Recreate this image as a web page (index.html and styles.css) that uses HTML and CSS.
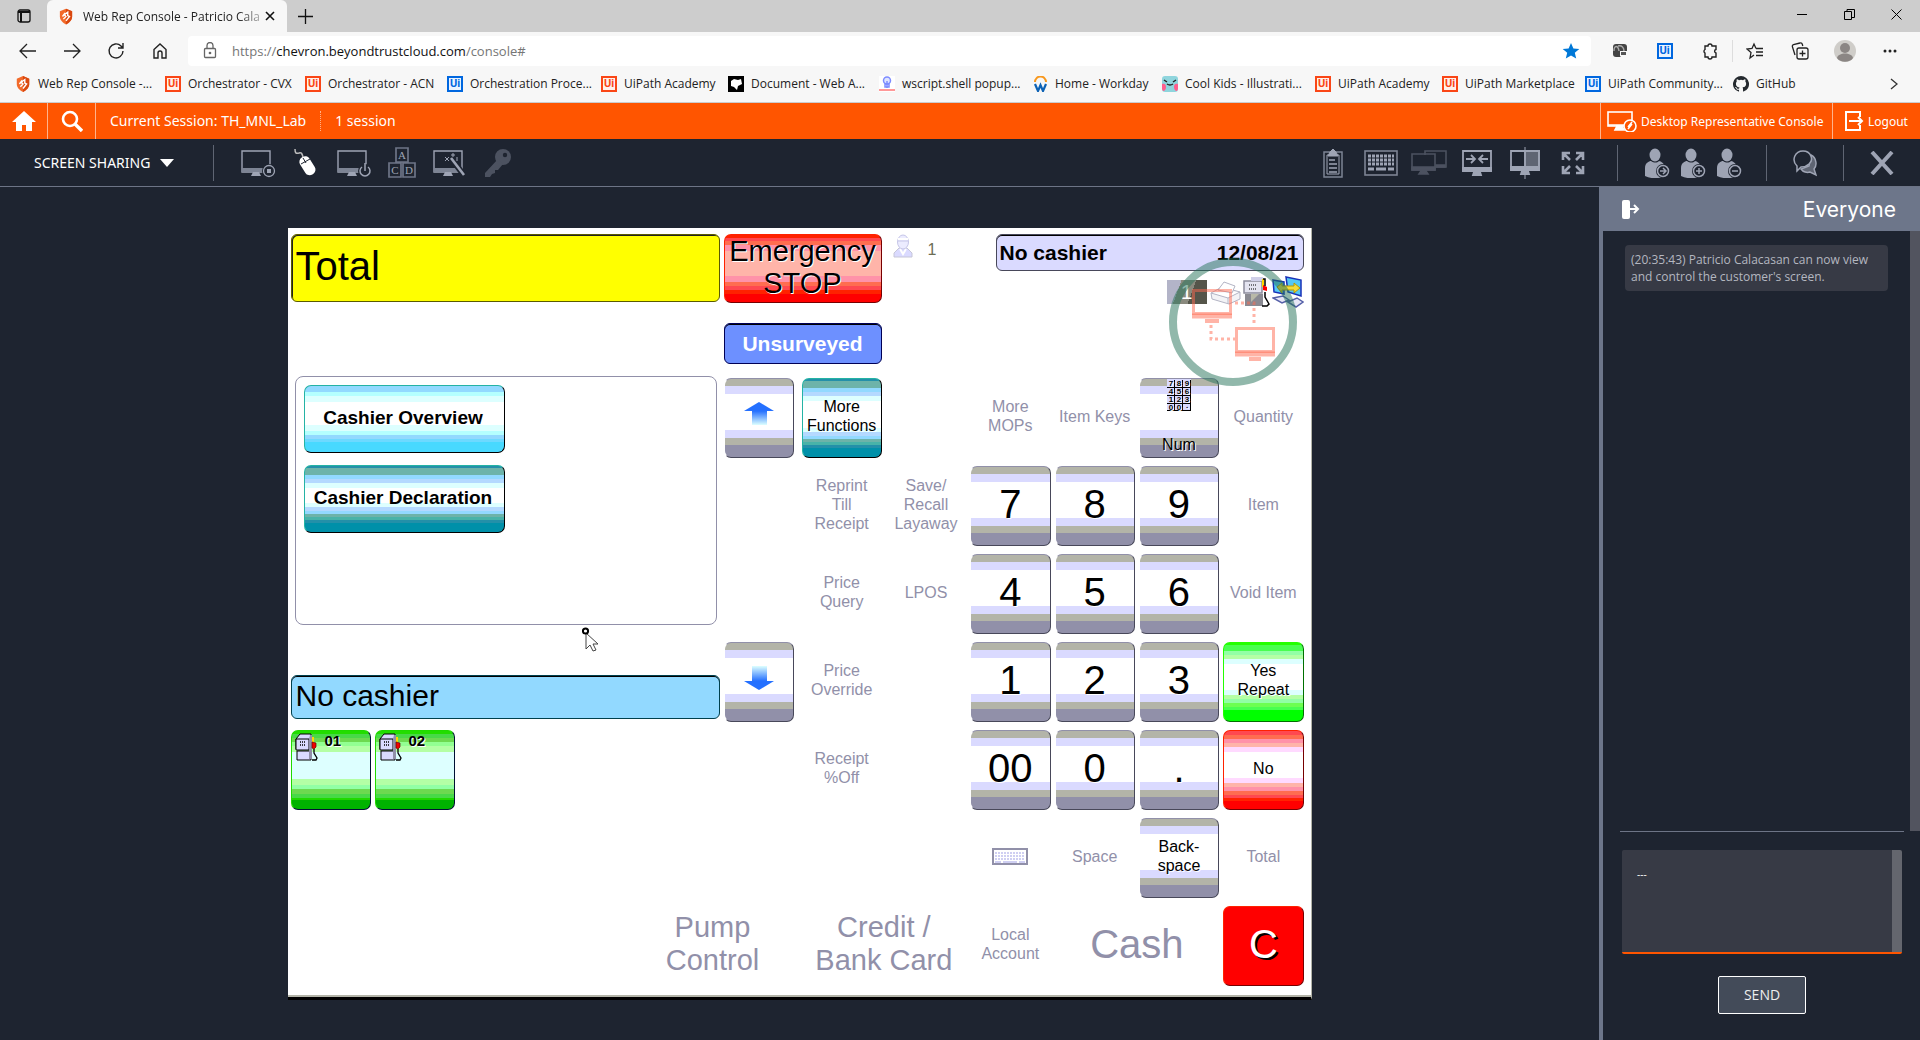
FILE: index.html
```html
<!DOCTYPE html>
<html lang="en">
<head>
<meta charset="utf-8">
<title>Web Rep Console</title>
<link rel="stylesheet" href="styles.css">
</head>
<body>
<svg class="defs" aria-hidden="true">
  <symbol id="shield" viewBox="0 0 16 18"><path fill="#f26a2a" d="M8 0 15 3v6c0 4-3 7-7 9-4-2-7-5-7-9V3z"/><path fill="#d9480f" d="M8 0 15 3v6c0 4-3 7-7 9z"/><path d="M5 12l3-3-2-2 4-3v4l2 1-4 5M4 9l3-4" fill="none" stroke="#fff" stroke-width="1.6"/></symbol>
  <symbol id="pump" viewBox="0 0 24 28"><path d="M1 6l4-5h11v15H1z" fill="#dadaff" stroke="#000"/><path d="M1 6h13V17H1zM2 18h14v9H2z" fill="#dadaff" stroke="#000"/><path d="M5 9h6M5 12h6" stroke="#000" stroke-width="1.3" stroke-dasharray="1 1"/><path d="M15 2h2v24h-3V6z" fill="#9190a9"/><path d="M18 4v5" stroke="#ffd900" stroke-width="2"/><path d="M17 9l4 1v4l-2 2-2-1z" fill="#f00000" stroke="#600" stroke-width=".7"/><path d="M19 16v4l3 5-1 2h-4" fill="none" stroke="#000" stroke-width="1.300"/></symbol>
  <symbol id="person" viewBox="0 0 26 30"><ellipse cx="10" cy="7" rx="5.500" ry="6.500"/><path d="M0 28V20c0-5 4-7 6-7 3 2 6 2 8 0 2 0 6 3 6 7v8c-6 3-14 3-20 0z"/><circle cx="18" cy="23" r="7" fill="#1e2430"/><circle cx="18" cy="23" r="5.500" fill="none" stroke="#9ea4b4" stroke-width="1.500"/></symbol>
  <symbol id="monitor" viewBox="0 0 36 30"><path d="M2 3h28v21H2z" fill="none" stroke="#9ea4b4" stroke-width="1.400"/><path d="M2 20h28v4H2z" fill="#7d8494"/><path d="M13 24h6l2 4H11z" fill="#9ea4b4"/></symbol>
</svg>

<header class="browser">
  <div class="tabs">
    <button class="plain tab-menu" aria-label="Tab actions"><svg width="16" height="16" viewBox="0 0 16 16" fill="none" stroke="#111" stroke-width="1.3"><rect x="2" y="2" width="12" height="12" rx="2"/><path d="M2 4h12M5 5v9" stroke-width="2"/></svg></button>
    <div class="tab"><svg width="14" height="17"><use href="#shield"/></svg><span class="tab-title">Web Rep Console - Patricio Cala</span><button class="plain" aria-label="Close tab"><svg width="10" height="10" viewBox="0 0 10 10"><path d="M1 1l8 8M9 1L1 9" stroke="#111" stroke-width="1.6"/></svg></button></div>
    <button class="plain new-tab" aria-label="New tab"><svg width="15" height="15" viewBox="0 0 15 15"><path d="M7.500 0v15M0 7.500h15" stroke="#111" stroke-width="1.3"/></svg></button>
    <div class="window-buttons">
      <button class="plain" aria-label="Minimize"><svg width="11" height="11" viewBox="0 0 11 11"><path d="M0 5.500h10" stroke="#000"/></svg></button>
      <button class="plain" aria-label="Restore"><svg width="11" height="11" viewBox="0 0 11 11" fill="none" stroke="#000"><path d="M.5 2.500h7v8h-7zM3 2V.5h7.500v8H8"/></svg></button>
      <button class="plain" aria-label="Close"><svg width="11" height="11" viewBox="0 0 11 11"><path d="M.5.5l10 10M10.500.5l-10 10" stroke="#000"/></svg></button>
    </div>
  </div>
  <div class="address-row">
    <div class="nav-buttons">
      <button class="plain" aria-label="Back"><svg width="18" height="16" viewBox="0 0 18 16" fill="none" stroke="#222" stroke-width="1.3"><path d="M17 8H1M8 1L1 8l7 7"/></svg></button>
      <button class="plain" aria-label="Forward"><svg width="18" height="16" viewBox="0 0 18 16" fill="none" stroke="#222" stroke-width="1.3"><path d="M1 8h16M10 1l7 7-7 7"/></svg></button>
      <button class="plain" aria-label="Reload"><svg width="18" height="18" viewBox="0 0 18 18" fill="none" stroke="#222" stroke-width="1.4"><path d="M16 9a7 7 0 1 1-2-5l2 2M16 1v5h-5"/></svg></button>
      <button class="plain" aria-label="Home"><svg width="18" height="18" viewBox="0 0 18 18" fill="none" stroke="#222" stroke-width="1.4"><path d="M3 7.500L9 2l6 5.500V16h-4v-5a2 2 0 0 0-4 0v5H3z"/></svg></button>
    </div>
    <div class="address"><svg width="14" height="18" viewBox="0 0 14 18" fill="none" stroke="#666" stroke-width="1.3"><rect x="1.500" y="6.500" width="11" height="9" rx="1"/><path d="M4 6V3.500a3 3 0 0 1 6 0V6"/><circle cx="7" cy="11" r=".7" fill="#666"/></svg><span class="url">https://<b>chevron.beyondtrustcloud.com</b>/console#</span><svg width="18" height="18" viewBox="0 0 18 18"><path fill="#0078d7" d="M9 1l2.400 5.400 5.900.5-4.500 3.900 1.400 5.800L9 13.500l-5.200 3.100 1.400-5.800L.7 6.900l5.900-.5z"/></svg></div>
    <div class="extensions">
      <button class="plain" aria-label="Recorder"><svg width="16" height="16" viewBox="0 0 16 16"><rect x="1" y="1" width="14" height="13" rx="3" fill="#444"/><path d="M2 8c0-6 4-6 5 0M6 3c4-1 6 2 6 5" fill="none" stroke="#aaa" stroke-width="1.400"/><path d="M8 8h8v7H10l-2-2z" fill="#f7f7f7"/><path d="M9 9h5v3h-5z" fill="#555"/></svg></button>
      <button class="plain" aria-label="UiPath"><span class="ui blue">Ui</span></button>
      <button class="plain" aria-label="Extensions"><svg width="18" height="18" viewBox="0 0 18 18" fill="none" stroke="#222" stroke-width="1.4"><path d="M4 4h3a2 2 0 0 1 4 0h4v3.500a1.800 1.800 0 0 0 0 3.500v4h-4a2 2 0 0 1-4 0H4v-4a2 2 0 0 1 0-3.500z"/></svg></button>
      <button class="plain" aria-label="Favorites"><svg width="18" height="18" viewBox="0 0 18 18" fill="none" stroke="#222" stroke-width="1.3"><path d="M10 6.500L8 2 6 6.500 1 7l4 3.500L4 16l4-3M10 6.500h7M10 10h7M10 13.500h7"/></svg></button>
      <button class="plain" aria-label="Collections"><svg width="18" height="18" viewBox="0 0 18 18" fill="none" stroke="#222" stroke-width="1.3"><rect x="6" y="6" width="11" height="11" rx="2"/><path d="M11.500 8.500v6M8.500 11.500h6M4 13L1.500 5c-.4-1 0-2 1-2.300L9 1c1-.3 2 .2 2.300 1.200l.5 1.800"/></svg></button>
      <button class="plain" aria-label="Profile"><svg width="22" height="22" viewBox="0 0 22 22"><circle cx="11" cy="11" r="11" fill="#cfcdc9"/><circle cx="11" cy="8" r="5" fill="#8b8684"/><path d="M3 18c1-6 15-6 16 0-3 5-13 5-16 0z" fill="#8b8684"/></svg></button>
      <button class="plain" aria-label="Settings"><svg width="14" height="4" viewBox="0 0 14 4" fill="#222"><circle cx="2" cy="2" r="1.500"/><circle cx="7" cy="2" r="1.500"/><circle cx="12" cy="2" r="1.500"/></svg></button>
    </div>
  </div>
  <nav class="bookmarks">
    <a href="#"><svg width="16" height="16"><use href="#shield"/></svg>Web Rep Console -...</a>
    <a href="#"><span class="ui">Ui</span>Orchestrator - CVX</a>
    <a href="#"><span class="ui">Ui</span>Orchestrator - ACN</a>
    <a href="#"><span class="ui blue">Ui</span>Orchestration Proce...</a>
    <a href="#"><span class="ui">Ui</span>UiPath Academy</a>
    <a href="#"><svg width="16" height="16" viewBox="0 0 16 16"><path fill="#000" d="M0 0h16v16H0z"/><path fill="#fff" d="M3 5l3-2 4 1 3-1 1 5-4 2-1 4-3-3-3-1z"/></svg>Document - Web A...</a>
    <a href="#"><svg width="16" height="16" viewBox="0 0 16 16"><path fill="#fff" d="M0 0h16v16H0z"/><circle cx="8" cy="4.500" r="3.500" fill="#dfe4ff" stroke="#7d8cff" stroke-width="1.500"/><path d="M8 5v7M6 8h4v3H6z" fill="none" stroke="#7d8cff" stroke-width="1.500"/><path d="M0 14h16" stroke="#f99" stroke-width="2"/></svg>wscript.shell popup...</a>
    <a href="#"><svg width="15" height="16" viewBox="0 0 15 16" fill="none"><path d="M2 6a5.500 5.500 0 0 1 11 0" stroke="#f8981d" stroke-width="2"/><path d="M2 8l3 7 2.500-6 2.500 6 3-7" stroke="#0d62b5" stroke-width="2.200"/></svg>Home - Workday</a>
    <a href="#"><svg width="16" height="16" viewBox="0 0 16 16"><rect width="16" height="16" rx="3" fill="#8fd5dd"/><path d="M0 8c3-1 4 1 4 3s-1 4-3 4l-1-2zM16 8c-3-1-4 1-4 3s1 4 3 4l1-2z" fill="#ff5f8d"/><path d="M2 4l3 2M14 4l-3 2M5 8q3 2 6 0" stroke="#222" stroke-width="1.500" fill="none"/></svg>Cool Kids - Illustrati...</a>
    <a href="#"><span class="ui">Ui</span>UiPath Academy</a>
    <a href="#"><span class="ui">Ui</span>UiPath Marketplace</a>
    <a href="#"><span class="ui blue">Ui</span>UiPath Community...</a>
    <a href="#"><svg width="16" height="16" viewBox="0 0 16 16"><path fill="#24292e" d="M8 0a8 8 0 0 0-2.530 15.590c.4.070.550-.170.550-.380v-1.490c-2.010.370-2.530-.490-2.690-.940-.090-.230-.480-.940-.820-1.130-.280-.150-.680-.520-.010-.530.630-.010 1.080.580 1.230.820.720 1.210 1.870.870 2.330.660.070-.520.280-.870.510-1.070-1.780-.200-3.640-.890-3.640-3.950 0-.870.310-1.590.820-2.150-.080-.200-.360-1.020.080-2.120 0 0 .670-.210 2.200.820a7.400 7.400 0 0 1 4 0c1.530-1.040 2.200-.820 2.200-.820.440 1.100.160 1.920.080 2.120.510.560.820 1.270.820 2.150 0 3.070-1.870 3.750-3.650 3.950.290.250.540.730.540 1.480v2.200c0 .210.150.460.550.380A8 8 0 0 0 8 0z"/></svg>GitHub</a>
    <button class="plain more" aria-label="More favorites"><svg width="8" height="12" viewBox="0 0 8 12"><path d="M1 1l6 5-6 5" fill="none" stroke="#333" stroke-width="1.300"/></svg></button>
  </nav>
</header>

<div class="session-bar">
  <a href="#" class="square" aria-label="Home"><svg width="24" height="20" viewBox="0 0 24 20" fill="#fff"><path d="M12 0l12 11h-4v9h-6v-6h-4v6H4v-9H0z"/></svg></a>
  <a href="#" class="square" aria-label="Search"><svg width="22" height="22" viewBox="0 0 22 22" fill="none" stroke="#fff"><circle cx="9" cy="9" r="7" stroke-width="2.600"/><path d="M14 14l7 7" stroke-width="3.400"/></svg></a>
  <span class="current">Current Session: TH_MNL_Lab</span>
  <span class="count">1 session</span>
  <a href="#" class="console-link"><svg width="30" height="22" viewBox="0 0 30 22" fill="none" stroke="#fff" stroke-width="1.600"><rect x="1" y="2" width="24" height="14"/><path d="M1 15h18M8 20h9l-2-4h-5z" fill="#fff"/><circle cx="23" cy="16" r="6" fill="#ff5500"/><path d="M21 17l4-5M21 19l4-5"/></svg>Desktop Representative Console</a>
  <a href="#" class="logout"><svg width="19" height="20" viewBox="0 0 19 20" fill="none" stroke="#fff" stroke-width="2"><path d="M15 6V1H1v18h14v-5M4 10h13M13 6l4 4-4 4"/></svg>Logout</a>
</div>

<div class="toolbar">
  <button class="plain mode">SCREEN SHARING <span class="caret"></span></button>
  <div class="tools left-tools">
    <button class="plain" aria-label="Stop screen sharing"><svg width="36" height="30" viewBox="0 0 36 30"><use href="#monitor"/><circle cx="29" cy="23" r="7" fill="#1e2430"/><circle cx="29" cy="23" r="5.500" fill="none" stroke="#9ea4b4" stroke-width="1.300"/><path d="M27 21h4v4h-4z" fill="#9ea4b4"/></svg></button>
    <button class="plain" aria-label="Mouse control"><svg width="24" height="30" viewBox="0 0 24 30"><path d="M1 1c0 4 1 5 4 4 2-1 3 0 4 4" fill="none" stroke="#bbb" stroke-width="1.500"/><rect x="8" y="8" width="11" height="20" rx="5" fill="#fff" transform="rotate(-32 13 18)"/><path d="M7 16l9-5M9 10l3 5" stroke="#1e2430"/></svg></button>
    <button class="plain" aria-label="Power"><svg width="36" height="30" viewBox="0 0 36 30"><use href="#monitor"/><circle cx="29" cy="23" r="7" fill="#1e2430"/><path d="M26 19a5 5 0 1 0 6 0M29 15v8" fill="none" stroke="#9ea4b4" stroke-width="1.500"/></svg></button>
    <button class="plain" aria-label="Special keys"><svg width="28" height="32" viewBox="0 0 28 32"><path d="M8 1h12v14H8zM1 16h12v14H1zM15 16h12v14H15z" fill="none" stroke="#6d7486" stroke-width="1.700"/><g fill="#9ea4b4" font-family="Liberation Serif" font-size="11" text-anchor="middle"><text x="14" y="12">A</text><text x="7" y="27">C</text><text x="21" y="27">D</text></g></svg></button>
    <button class="plain" aria-label="Canned scripts"><svg width="36" height="30" viewBox="0 0 36 30"><use href="#monitor"/><path d="M19 10l12 16" stroke="#1e2430" stroke-width="6"/><path d="M19 10l13 17" stroke="#9ea4b4" stroke-width="2.600"/><path d="M13 9l4 4M17 9l-4 4M21 5v4M19 7h4M25 9v4" stroke="#9ea4b4"/></svg></button>
    <button class="plain" aria-label="Credentials"><svg width="28" height="30" viewBox="0 0 28 30"><circle cx="19" cy="9" r="8" fill="#4c5260"/><circle cx="21" cy="7" r="2.200" fill="#1e2430"/><path d="M14 11L1 25v4h5l2-3 3-1v-3h3l5-6z" fill="#4c5260"/></svg></button>
  </div>
  <div class="tools view-tools">
    <button class="plain" aria-label="Clipboard"><svg width="22" height="30" viewBox="0 0 22 30" fill="none" stroke="#9ea4b4"><rect x="2" y="4" width="18" height="25" stroke="#7d8494" stroke-width="1.500"/><path d="M5 7h12v19H5z"/><path d="M6 8l2-4 3-3 3 3 2 4z" fill="#9ea4b4"/><path d="M7 12h6M7 16h8M7 20h8M7 24h8" stroke-width="1.500"/></svg></button>
    <button class="plain" aria-label="Keyboard"><svg width="34" height="26" viewBox="0 0 34 26" fill="none" stroke="#9ea4b4"><rect x="1" y="1" width="32" height="24" stroke="#7d8494" stroke-width="1.600"/><path d="M4 6h26M4 10h26M4 14h26" stroke-width="2.800" stroke-dasharray="3 1"/><path d="M4 19h6M12 19h10M24 19h6" stroke-width="3"/></svg></button>
    <button class="plain" aria-label="Select display"><svg width="36" height="26" viewBox="0 0 36 26" fill="none" stroke="#4c5260" stroke-width="1.600"><path d="M14 5V1h21v16H25M1 4h23v16H1z"/><path d="M1 17h23v3H1zM10 21h5l2 3H8zM25 15h9v2h-9z" fill="#4c5260"/></svg></button>
    <button class="plain" aria-label="Scale"><svg width="32" height="28" viewBox="0 0 32 28" fill="none" stroke="#9ea4b4" stroke-width="1.800"><path d="M2 2h28v20H2z"/><path d="M2 19h28v3H2zM13 23h6l1 3h-8z" fill="#9ea4b4"/><path d="M5 10h9M10 6l4 4-4 4M27 10h-9M22 6l-4 4 4 4"/></svg></button>
    <button class="plain" aria-label="Split view"><svg width="32" height="32" viewBox="0 0 32 32" fill="none" stroke="#9ea4b4" stroke-width="1.800"><path d="M16 4h14v16H16z" fill="#5f6573"/><path d="M2 4h28v19H2z"/><path d="M2 20h28v3H2zM13 24h6l1 3h-8z" fill="#9ea4b4"/><path d="M16 0v32" stroke-width="1"/></svg></button>
    <button class="plain" aria-label="Full screen"><svg width="24" height="24" viewBox="0 0 24 24" fill="none" stroke="#9ea4b4" stroke-width="2.600"><path d="M2 9V2h7M2 2l7 7M15 2h7v7M22 2l-7 7M2 15v7h7M2 22l7-7M15 22h7v-7M22 22l-7-7"/></svg></button>
  </div>
  <div class="tools people-tools">
    <button class="plain" aria-label="Share session"><svg width="26" height="30" viewBox="0 0 26 30" fill="#9ea4b4"><use href="#person"/><path d="M15 23h6M18 20l3 3-3 3" fill="none" stroke="#9ea4b4" stroke-width="1.500"/></svg></button>
    <button class="plain" aria-label="Add representative"><svg width="26" height="30" viewBox="0 0 26 30" fill="#9ea4b4"><use href="#person"/><path d="M15 23h6M18 20v6" stroke="#9ea4b4" stroke-width="1.500"/></svg></button>
    <button class="plain" aria-label="Remove representative"><svg width="26" height="30" viewBox="0 0 26 30" fill="#9ea4b4"><use href="#person"/><path d="M15 23h6" stroke="#9ea4b4" stroke-width="1.500"/></svg></button>
  </div>
  <div class="tools one-tool"><button class="plain" aria-label="Chat"><svg width="24" height="28" viewBox="0 0 24 28" fill="none" stroke="#9ea4b4" stroke-width="1.500"><path d="M18 6c6 3 6 11 3 14l2 6-6-3c-3 1-7 0-9-3l8-3z" fill="#5f6573"/><path d="M4 22v-5c-6-6-2-15 6-15s11 9 6 13c-3 3-5 3-8 3z" fill="#1e2430"/></svg></button></div>
  <div class="tools one-tool"><button class="plain" aria-label="Close session"><svg width="24" height="24" viewBox="0 0 24 24"><path d="M2 1l20 22M22 1L2 23" stroke="#9ea4b4" stroke-width="4"/></svg></button></div>
</div>

<div class="workspace">
  <main class="stage">
    <div class="pos">
      <div class="pos-main">
        <div class="pos-left">
          <div class="total">Total</div>
          <div class="list">
            <button class="wide sky">Cashier Overview</button>
            <button class="wide teal">Cashier Declaration</button>
          </div>
          <div class="cashier">No cashier</div>
          <div class="pumps">
            <button class="key green-dark pump"><svg width="24" height="28"><use href="#pump"/></svg><b>01</b></button>
            <button class="key green-dark pump"><svg width="24" height="28"><use href="#pump"/></svg><b>02</b></button>
          </div>
        </div>
        <div class="pos-right">
          <div class="pos-top">
            <div class="alerts">
              <button class="key emergency">Emergency<br>STOP</button>
              <button class="unsurveyed">Unsurveyed</button>
            </div>
            <div class="user"><svg width="20" height="24" viewBox="0 0 20 24"><path d="M1 23v-4l5-5h8l5 5v4z" fill="#dadaff" stroke="#c6c6d8"/><ellipse cx="10" cy="8" rx="5.500" ry="7" fill="#ececff" stroke="#c6c6e8"/><path d="M5 5h10M7 15l3 5 3-5" stroke="#fff" stroke-width="2" fill="none"/><path d="M5 7h10" stroke="#c6c6e8"/></svg><span>1</span></div>
            <div class="status">
              <div class="status-line"><span>No cashier</span><span>12/08/21</span></div>
              <div class="status-icons">
                <span class="terminal">1</span>
                <svg width="32" height="26" viewBox="0 0 32 26" fill="#f3f3f6" stroke="#b3b4c4"><path d="M1 14L12 8l18 5v7l-11 5L2 20zM1 14l17 5 12-6M18 19v6"/><path d="M8 11L14 3l11 4-3 7z" fill="#fff"/></svg>
                <svg width="28" height="30" viewBox="0 0 28 30"><path d="M1 4h18v12H1z" fill="#e4e4f0" stroke="#8c8c9c" stroke-width="1.500"/><path d="M8 0h12v4H8z" fill="#cfcfe8"/><path d="M6 8h8M6 12h8" stroke="#000" stroke-dasharray="1 1"/><path d="M2 17h18v12H2z" fill="#8a8a92"/><path d="M8 17h8L8 25z" fill="#b9b9a8"/><path d="M20 2v8" stroke="#ffd900" stroke-width="2"/><path d="M20 8l4 2v4l-4-1z" fill="#f00"/><path d="M20 2h2v7M22 15v5l4 7-2 2h-5" fill="none" stroke="#000" stroke-width="1.500"/></svg>
                <svg width="32" height="32" viewBox="0 0 32 32"><path d="M1 4l11 2v12L2 16zM14 1l15 3v16l-13-4z" fill="#55c8f5" stroke="#1831b8" stroke-width="1.500"/><path d="M1 22l10-2 6 4-7 3zM16 26l9-4 6 4-7 5z" fill="#e7e7f7" stroke="#5560a8" stroke-width="1.500"/><path d="M5 11l5-4v3h12V7l6 5-6 5v-3H10v3z" fill="#f4dc39" stroke="#b89900"/></svg>
              </div>
            </div>
          </div>
          <div class="keypad">
            <button class="key gray r1" aria-label="Scroll up"><svg width="30" height="24" viewBox="0 0 30 24"><defs><linearGradient id="fade" x1="0" y1="0" x2="0" y2="1"><stop offset="0" stop-color="#2470ff"/><stop offset="1" stop-color="#dff"/></linearGradient></defs><path d="M15 0l15 9H0z" fill="#2470ff"/><path d="M8 9h15v14H8z" fill="url(#fade)"/></svg></button>
            <button class="key teal r1 c2">More Functions</button>
            <button class="key r1 c4" disabled>More MOPs</button>
            <button class="key r1 c5" disabled>Item Keys</button>
            <button class="key gray num r1 c6"><svg width="24" height="32" viewBox="0 0 24 32"><path d="M0 0h24v32H0z" fill="#dadaff"/><path d="M7.500 1v31M15.500 1v31M23.500 1v31M0 8.500h24M0 16.500h24M0 24.500h24M0 31.500h24" stroke="#000"/><g font-family="Liberation Sans" font-weight="bold" font-size="8" text-anchor="middle"><text x="4" y="7">7</text><text x="12" y="7">8</text><text x="20" y="7">9</text><text x="4" y="15">4</text><text x="12" y="15">5</text><text x="20" y="15">6</text><text x="4" y="23">1</text><text x="12" y="23">2</text><text x="20" y="23">3</text><text x="4" y="31">0</text><text x="12" y="31">0</text><text x="20" y="29">.</text></g></svg>Num</button>
            <button class="key r1 c7" disabled>Quantity</button>

            <button class="key r2 c2" disabled>Reprint<br>Till<br>Receipt</button>
            <button class="key r2 c3" disabled>Save/<br>Recall<br>Layaway</button>
            <button class="key gray digit r2 c4">7</button>
            <button class="key gray digit r2 c5">8</button>
            <button class="key gray digit r2 c6">9</button>
            <button class="key r2 c7" disabled>Item</button>

            <button class="key r3 c2" disabled>Price<br>Query</button>
            <button class="key r3 c3" disabled>LPOS</button>
            <button class="key gray digit r3 c4">4</button>
            <button class="key gray digit r3 c5">5</button>
            <button class="key gray digit r3 c6">6</button>
            <button class="key r3 c7" disabled>Void Item</button>

            <button class="key gray r4" aria-label="Scroll down"><svg width="30" height="24" viewBox="0 0 30 24"><defs><linearGradient id="rise" x1="0" y1="0" x2="0" y2="1"><stop offset="0" stop-color="#dff"/><stop offset="1" stop-color="#2470ff"/></linearGradient></defs><path d="M15 24l15-9H0z" fill="#2470ff"/><path d="M8 0h15v15H8z" fill="url(#rise)"/></svg></button>
            <button class="key r4 c2" disabled>Price<br>Override</button>
            <button class="key gray digit r4 c4">1</button>
            <button class="key gray digit r4 c5">2</button>
            <button class="key gray digit r4 c6">3</button>
            <button class="key yes r4 c7">Yes<br>Repeat</button>

            <button class="key r5 c2" disabled>Receipt<br>%Off</button>
            <button class="key gray digit r5 c4">00</button>
            <button class="key gray digit r5 c5">0</button>
            <button class="key gray digit r5 c6">.</button>
            <button class="key no r5 c7">No</button>

            <button class="key r6 c4" disabled aria-label="Keyboard"><svg width="36" height="17" viewBox="0 0 36 17"><path d="M1 1h34v15H1z" fill="#fff" stroke="#9190a9" stroke-width="2"/><path d="M3 5h30M3 8h30M3 11h30" stroke="#cfcff2" stroke-width="2" stroke-dasharray="2 1"/><path d="M3 14h6M11 14h14M27 14h6" stroke="#cfcff2" stroke-width="2"/></svg></button>
            <button class="key r6 c5" disabled>Space</button>
            <button class="key gray r6 c6">Back-<br>space</button>
            <button class="key r6 c7" disabled>Total</button>
          </div>
        </div>
      </div>
      <div class="payments">
        <button class="key large" disabled>Pump<br>Control</button>
        <button class="key large double c2" disabled>Credit /<br>Bank Card</button>
        <button class="key c4" disabled>Local<br>Account</button>
        <button class="key digit double c5" disabled>Cash</button>
        <button class="key digit clear c7">C</button>
      </div>
      <svg class="connection" width="128" height="128" viewBox="0 0 128 128" fill="none"><circle cx="64" cy="64" r="60" stroke="#247157" stroke-opacity=".5" stroke-width="8"/><g stroke="#ff6a50" stroke-opacity=".5" stroke-width="3"><path d="M24.500 32.500h37v23h-37zM67.500 70.500h37v23h-37z"/><path d="M23 58h40M66 96h40" stroke-width="5"/><path d="M36 63h14M80 101h12" stroke-width="4"/><path d="M42 67v14h24M66 45h19v23" stroke-dasharray="3 3"/></g></svg>
      <svg class="pointer" width="18" height="26" viewBox="0 0 18 26"><path d="M4 6v16l4-4 3 6 3-1-3-6h5z" fill="#fff" stroke="#444"/><circle cx="3.500" cy="4" r="2.600" fill="#fff" stroke="#000" stroke-width="2"/></svg>
    </div>
  </main>
  <aside class="chat">
    <div class="chat-head"><button class="plain" aria-label="Collapse"><svg width="20" height="20" viewBox="0 0 20 20"><rect x="1" y="1" width="8" height="19" rx="2" fill="#fff"/><path d="M8 10h9M13 6l4 4-4 4" fill="none" stroke="#fff" stroke-width="2"/></svg></button><h2>Everyone</h2></div>
    <div class="log"><p>(20:35:43) Patricio Calacasan can now view and control the customer's screen.</p></div>
    <form class="compose">
      <textarea aria-label="Message">---</textarea>
      <button type="button">SEND</button>
    </form>
  </aside>
</div>
</body>
</html>
```
FILE: styles.css
```css
* { box-sizing: border-box; }
body {
  margin: 0;
  min-height: 100vh;
  display: flex;
  flex-direction: column;
  background: #1e2430;
  color: #fff;
  font: 14px "Noto Sans", "Open Sans", sans-serif;
}
.defs { position: absolute; width: 0; height: 0; }
svg { flex: none; display: block; }
a { color: inherit; text-decoration: none; }
button { font: inherit; color: inherit; cursor: pointer; }
.plain {
  display: flex;
  align-items: center;
  justify-content: center;
  padding: 0;
  border: 0;
  background: none;
}

/* Browser window */
.browser { background: #f7f7f7; color: #222; font-family: "Open Sans", sans-serif; font-size: 12px; border-bottom: 1px solid #ccc; }
.tabs { display: flex; height: 32px; background: #cdcdcd; }
.tab-menu { width: 47px; }
.tab {
  display: flex;
  align-items: center;
  width: 240px;
  padding: 0 12px;
  background: #f7f7f7;
  border-radius: 6px 6px 0 0;
}
.tab-title {
  flex: 1;
  margin-left: 10px;
  white-space: nowrap;
  mask-image: linear-gradient(90deg, #000 85%, rgba(0, 0, 0, .2));
}
.new-tab { width: 36px; }
.window-buttons { display: flex; margin-left: auto; height: 28px; }
.window-buttons .plain { width: 47px; }
.address-row { display: flex; align-items: center; height: 38px; }
.nav-buttons { display: flex; width: 188px; padding-left: 6px; }
.nav-buttons .plain { width: 44px; }
.address {
  flex: 1;
  display: flex;
  align-items: center;
  gap: 15px;
  height: 30px;
  padding: 0 11px 0 15px;
  background: #fff;
  border-radius: 4px;
  font-size: 13px;
  color: #767676;
}
.url { flex: 1; }
.url b { font-weight: 400; color: #111; }
.extensions { display: flex; padding: 0 8px 0 6px; }
.extensions .plain { width: 45px; height: 22px; }
.extensions .plain:nth-child(4) { border-left: 1px solid #ddd; }
.bookmarks {
  display: grid;
  grid-template-columns: 150px 140px 142px 154px 127px 151px 154px 129px 153px 127px 143px 148px 70px 1fr;
  align-items: center;
  height: 32px;
  padding: 0 22px 5px 15px;
}
.bookmarks a { display: flex; align-items: center; gap: 7px; white-space: nowrap; }
.more { justify-self: end; }
.ui {
  flex: none;
  width: 16px;
  height: 16px;
  border: 2px solid #fa4616;
  background: #fff1ec;
  color: #fa4616;
  font: bold 11px/12px "Roboto", sans-serif;
  text-align: center;
}
.ui.blue { border-color: #0067df; background: #e9f3ff; color: #0067df; }

/* Session bar */
.session-bar { display: flex; align-items: stretch; height: 36px; background: #ff5500; }
.session-bar > * { display: flex; align-items: center; }
.square { width: 48px; justify-content: center; border-right: 1px solid #ffb38c; }
.current { padding: 0 14px 2px; }
.count { height: 20px; align-self: center; padding: 0 0 2px 14px; border-left: 1px dotted #ffb38c; }
.console-link, .logout { border-left: 1px solid #ffb38c; gap: 4px; font-size: 12px; }
.console-link { margin-left: auto; width: 232px; padding-left: 6px; }
.logout { width: 88px; padding-left: 12px; }

/* Session toolbar */
.toolbar { display: flex; align-items: center; height: 48px; border-bottom: 1px solid #6d7486; }
.mode { width: 213px; gap: 10px; justify-content: flex-start; padding-left: 34px; }
.caret { border: 7px solid transparent; border-top: 8px solid #fff; border-bottom: 0; }
.tools { display: flex; align-items: center; height: 36px; border-left: 1px solid #5f6573; }
.left-tools { padding-left: 20px; }
.left-tools .plain { width: 48px; }
.view-tools { margin-left: auto; padding-right: 20px; border: 0; }
.view-tools .plain { width: 48px; }
.people-tools { width: 149px; padding-left: 22px; }
.people-tools .plain { width: 36px; }
.one-tool { width: 77px; justify-content: center; }

/* Shared screen */
.workspace { flex: 1; display: flex; }
.stage { flex: 1; display: flex; align-items: center; justify-content: center; }
.pos {
  position: relative;
  width: 1024px;
  padding: 6px 7px 11px 3px;
  background: #fff;
  color: #000;
  border-right: 1px solid #b3b4a8;
  border-bottom: 3px solid #000;
  box-shadow: inset 0 -2px #b3b4a8;
  font: 16px/19px "Liberation Sans", Arial, sans-serif;
}
.pos-main { display: flex; gap: 4px; }
.pos-left { width: 429px; }
.pos-right { flex: 1; }
.total, .cashier { display: flex; align-items: center; padding: 0 0 2px 4px; border: 1px solid #5b5b00; border-radius: 6px; }
.total { height: 68px; background: #ff0; font-size: 40px; box-shadow: inset 1px 1px #222; }
.cashier { height: 44px; background: #92d9ff; border-color: #00404d; font-size: 30px; box-shadow: inset 0 1px #000; }
.list {
  display: flex;
  flex-direction: column;
  align-items: flex-start;
  gap: 12px;
  height: 249px;
  margin: 74px 3px 50px 4px;
  padding: 8px;
  border: 1px solid #9190a9;
  border-radius: 8px;
}
.wide {
  width: 201px;
  height: 68px;
  padding: 0 2px 3px 0;
  border: 1px solid #000;
  border-top-color: #24b3a5;
  border-left-color: #24b3a5;
  border-radius: 7px;
  font-weight: 700;
  font-size: 19px;
}
.sky { background: linear-gradient(#92d9ff 6px, #b4ffff 6px 10px, #dff 10px 16px, #fff 16px 39px, #dff 39px 45px, #b4ffff 45px 49px, #92d9ff 49px 53px, #6dd9ff 53px 56px, #48d9ff 56px); }
.teal { background: linear-gradient(#2490a9 2px, #6db3a9 2px 9px, #92d9ff 9px 13px, #b4d9ff 13px 17px, #dff 17px 22px, #fff 22px calc(100% - 29px), #dff calc(100% - 29px) calc(100% - 25px), #b4d9ff calc(100% - 25px) calc(100% - 21px), #92d9ff calc(100% - 21px) calc(100% - 18px), #6db3a9 calc(100% - 18px) calc(100% - 15px), #48b3a9 calc(100% - 15px) calc(100% - 12px), #2490a9 calc(100% - 12px) calc(100% - 9px), #0090a9 calc(100% - 9px)); }
.pumps { display: flex; gap: 4px; margin-top: 11px; }
.key {
  display: flex;
  align-items: center;
  justify-content: center;
  width: 100%;
  height: 80px;
  padding: 0 0 3px;
  border: 1px solid #000;
  border-radius: 7px;
  text-shadow: 1px 1px #fff;
}
.key:disabled { border-color: transparent; background: none; color: #9190a9; text-shadow: none; cursor: default; }
.pumps .key { width: 80px; align-items: flex-start; justify-content: flex-start; gap: 6px; padding: 2px 3px; font-size: 15px; line-height: 15px; }
.green-dark { background: linear-gradient(#2d0 3px, #48d948 3px 7px, #6dd950 7px 11px, #92ff92 11px 15px, #b4ffa5 15px 21px, #dff 21px 48px, #b4ffa5 48px 54px, #92ffa5 54px 58px, #6dd950 58px 63px, #48d948 63px 67px, #20d900 67px 69px, #00b300 69px); border-color: #20d900 #013 #013 #20d900; }
.pos-top { display: flex; height: 144px; }
.alerts { display: flex; flex-direction: column; gap: 20px; width: 158px; }
.emergency {
  height: 69px;
  border-color: #f20 #700 #700 #f20;
  background: linear-gradient(#f20 3px, #ff4850 3px 6px, #ff6d50 6px 10px, #ff92a9 10px 16px, #ffb4a9 16px 41px, #ff92a9 41px 47px, #ff6d50 47px 51px, #ff4850 51px 55px, #f20 55px 59px, #f00 59px);
  font-size: 29px;
  line-height: 32px;
}
.unsurveyed { height: 41px; padding: 0; border: 1px solid #000055; border-radius: 6px; background: #6d90ff; color: #fff; font-size: 21px; font-weight: 700; box-shadow: inset 0 1px #000; }
.user { display: flex; gap: 15px; padding-left: 11px; color: #6d6d55; }
.user span { padding-top: 6px; }
.status { width: 308px; margin-left: auto; }
.status-line { display: flex; align-items: center; justify-content: space-between; height: 37px; padding: 0 4px 0 3px; border: 1px solid #48485a; border-radius: 6px; background: #dadaff; font-size: 21px; font-weight: 700; box-shadow: inset 0 1px #000; }
.status-icons { display: flex; align-items: center; justify-content: flex-end; gap: 1px; padding-top: 5px; }
.terminal { width: 40px; height: 24px; margin-right: 2px; background: linear-gradient(110deg, #b3b4c8 0 30%, #8a8a7e 30% 60%, #55554a 60%); color: #fff; font-size: 21px; line-height: 24px; text-align: center; }
.keypad, .payments {
  display: grid;
  grid-template-columns: 74px repeat(6, 1fr);
  grid-auto-rows: 80px;
  gap: 8px 4px;
}
.gray {
  border-color: #9190a9 #48485a #48485a #fff;
  background: linear-gradient(#b3b4a8 7px, #dadaff 7px 15px, #fff 15px 51px, #dadaff 51px 59px, #b3b4a8 59px 66px, #9190a9 66px);
}
.keypad [aria-label^="Scroll"] { width: 70px; padding-bottom: 7px; }
.keypad .teal { border-color: #24b3a5 #000 #000 #24b3a5; }
.yes { border-color: #24ff00 #007000 #007000 #24ff00; background: linear-gradient(#24ff00 2px, #48ff50 2px 8px, #92ffa5 8px 12px, #b4ffa5 12px 16px, #dff 16px 21px, #fff 21px 47px, #dff 47px 52px, #b4ffa5 52px 56px, #92ffa5 56px 60px, #6dff50 60px 64px, #48ff50 64px 67px, #0f0 67px); }
.no { border-color: #f20 #700 #700 #f20; background: linear-gradient(#ff4850 4px, #ff6d50 4px 8px, #ff92a9 8px 12px, #ffb4a9 12px 16px, #ffdaff 16px 21px, #fff 21px 47px, #ffdaff 47px 52px, #ffb4a9 52px 56px, #ff92a9 56px 60px, #ff6d50 60px 64px, #ff4850 64px 67px, #f20 67px 70px, #f00 70px); }
.num { flex-direction: column; justify-content: space-between; }
.digit { font-size: 40px; line-height: 44px; }
.large { font-size: 29px; line-height: 33px; }
.double { grid-column-end: span 2; }
.r1 { grid-row: 1; }
.r2 { grid-row: 2; }
.r3 { grid-row: 3; }
.r4 { grid-row: 4; }
.r5 { grid-row: 5; }
.r6 { grid-row: 6; }
.c2 { grid-column-start: 2; }
.c3 { grid-column-start: 3; }
.c4 { grid-column-start: 4; }
.c5 { grid-column-start: 5; }
.c6 { grid-column-start: 6; }
.c7 { grid-column-start: 7; }
.payments { grid-template-columns: 170px repeat(6, 1fr); margin: 8px 0 0 337px; }
.clear { border-color: #f20 #700 #700 #f20; background: #f00; color: #fff; text-shadow: 2px 2px #000; }
.connection { position: absolute; right: 14px; top: 30px; }
.pointer { position: absolute; left: 294px; top: 399px; }

/* Chat */
.chat { display: flex; flex-direction: column; width: 321px; border-left: 4px solid #6d768a; font-family: "Open Sans", sans-serif; }
.chat-head { display: flex; align-items: center; justify-content: space-between; height: 44px; padding: 0 24px 0 18px; background: #6d768a; }
.chat-head h2 { margin: 0; font: 400 21px "Inter", sans-serif; }
.log { flex: 1; border-right: 10px solid #52545f; padding: 14px 22px; }
.log p { margin: 0; padding: 6px; border-radius: 4px; background: #373a45; color: #b4b7c0; font-size: 12px; line-height: 17px; }
.compose { display: flex; flex-direction: column; align-items: center; height: 209px; margin: 0 16px 0 17px; border-top: 1px solid #6d7486; padding-top: 18px; gap: 22px; }
.compose textarea { width: 280px; height: 104px; padding: 17px 15px; resize: none; border: 0; border-bottom: 2px solid #ff5500; border-radius: 2px; background: linear-gradient(270deg, #64666e 10px, #373a45 10px); color: #fff; font: 10px "Open Sans", sans-serif; outline: 0; }
.compose button { width: 88px; height: 38px; padding-bottom: 3px; border: 1px solid #fff; border-radius: 2px; background: #434b59; color: #eee; }
```
